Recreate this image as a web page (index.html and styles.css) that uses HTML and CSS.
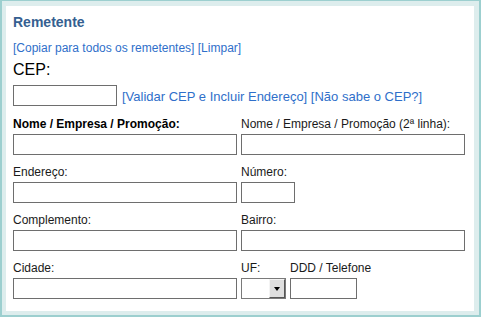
FILE: index.html
```html
<!DOCTYPE html>
<html lang="pt-BR">
<head>
<meta charset="utf-8">
<title>Remetente</title>
<link rel="stylesheet" href="styles.css">
</head>
<body>
<div class="frame">
  <div class="panel">
    <h2 class="title">Remetente</h2>
    <div class="actions"><a href="#">[Copiar para todos os remetentes]</a> <a href="#">[Limpar]</a></div>
    <div class="cep-label">CEP:</div>
    <div class="cep-row">
      <input class="field cep" type="text">
      <span class="cep-links"><a href="#">[Validar CEP e Incluir Endereço]</a> <a href="#">[Não sabe o CEP?]</a></span>
    </div>
    <div class="grid">
      <div class="item">
        <label class="lbl strong">Nome / Empresa / Promoção:</label>
        <input class="field full" type="text">
      </div>
      <div class="item">
        <label class="lbl">Nome / Empresa / Promoção (2ª linha):</label>
        <input class="field full" type="text">
      </div>
      <div class="item">
        <label class="lbl">Endereço:</label>
        <input class="field full" type="text">
      </div>
      <div class="item">
        <label class="lbl">Número:</label>
        <input class="field num" type="text">
      </div>
      <div class="item">
        <label class="lbl">Complemento:</label>
        <input class="field full" type="text">
      </div>
      <div class="item">
        <label class="lbl">Bairro:</label>
        <input class="field full" type="text">
      </div>
      <div class="item">
        <label class="lbl">Cidade:</label>
        <input class="field full" type="text">
      </div>
      <div class="item split">
        <div class="sub uf">
          <label class="lbl">UF:</label>
          <span class="select-wrap"><select class="select"><option></option></select><span class="select-btn"></span></span>
        </div>
        <div class="sub">
          <label class="lbl">DDD / Telefone</label>
          <input class="field phone" type="text">
        </div>
      </div>
    </div>
  </div>
</div>
</body>
</html>
```
FILE: styles.css
```css
html, body {
  margin: 0;
  padding: 0;
  background: #ffffff;
}
body {
  font-family: "Liberation Sans", Arial, sans-serif;
  color: #111111;
}
.frame {
  width: 481px;
  height: 317px;
  box-sizing: border-box;
  border: 2px solid #9ccfcf;
  border-top-width: 1px;
  background: #ddeded;
  padding: 5px 5px 4px 4px;
  display: flex;
}
.panel {
  flex: 1;
  background: #ffffff;
  padding: 8px 0 0 7px;
}
.title {
  margin: 0;
  font-size: 14px;
  line-height: 16px;
  font-weight: bold;
  color: #355f91;
}
a {
  color: #2f6fca;
  text-decoration: none;
}
.actions {
  margin-top: 11px;
  font-size: 12px;
  line-height: 14px;
}
.cep-label {
  margin-top: 6px;
  font-size: 16px;
  line-height: 18px;
  color: #000;
}
.cep-row {
  margin-top: 6px;
  display: flex;
  align-items: center;
}
.cep-links {
  margin-left: 5px;
  font-size: 13px;
  line-height: 15px;
  padding-top: 1px;
}
.field {
  box-sizing: border-box;
  height: 21px;
  border: 1px solid #6e6e6e;
  background: #fff;
  margin: 0;
  padding: 0 2px;
  font: 12px "Liberation Sans", Arial, sans-serif;
  display: block;
}
.cep { width: 104px; }
.full { width: 224px; }
.num { width: 54px; }
.phone { width: 67px; }
.grid {
  margin-top: 11px;
  display: grid;
  grid-template-columns: 224px 224px;
  column-gap: 4px;
  row-gap: 10px;
}
.item {
  display: flex;
  flex-direction: column;
}
.lbl {
  display: block;
  font-size: 12px;
  line-height: 14px;
  margin-bottom: 3px;
  color: #1a1a1a;
}
.strong {
  font-weight: bold;
  color: #000;
}
.split {
  flex-direction: row;
  gap: 4px;
}
.sub {
  display: flex;
  flex-direction: column;
}
.select-wrap {
  position: relative;
  display: block;
  width: 45px;
  height: 21px;
}
.select {
  appearance: none;
  -webkit-appearance: none;
  box-sizing: border-box;
  width: 45px;
  height: 21px;
  border: 1px solid #7a7a7a;
  background: #fff;
  margin: 0;
  display: block;
}
.select-btn {
  position: absolute;
  top: 1px;
  right: 1px;
  width: 16px;
  height: 19px;
  box-sizing: border-box;
  background: #dedede;
  border: 1px solid #f4f4f4;
  border-right-color: #555;
  border-bottom-color: #555;
  pointer-events: none;
}
.select-btn::after {
  content: "";
  position: absolute;
  left: 4px;
  top: 7px;
  border-left: 3.5px solid transparent;
  border-right: 3.5px solid transparent;
  border-top: 4px solid #000;
}
```
